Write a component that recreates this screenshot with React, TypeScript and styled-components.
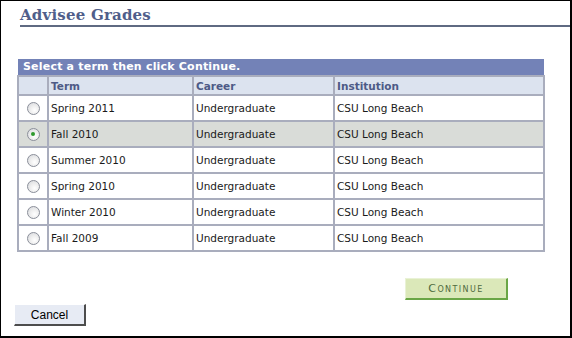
import styled, { createGlobalStyle } from "styled-components";

const GlobalStyle = createGlobalStyle`
  html, body {
    margin: 0;
    padding: 0;
    background: #ffffff;
  }
`;

const terms = [
  { term: "Spring 2011", career: "Undergraduate", institution: "CSU Long Beach" },
  { term: "Fall 2010", career: "Undergraduate", institution: "CSU Long Beach" },
  { term: "Summer 2010", career: "Undergraduate", institution: "CSU Long Beach" },
  { term: "Spring 2010", career: "Undergraduate", institution: "CSU Long Beach" },
  { term: "Winter 2010", career: "Undergraduate", institution: "CSU Long Beach" },
  { term: "Fall 2009", career: "Undergraduate", institution: "CSU Long Beach" },
];

export default function App() {
  const selected = 1;

  return (
    <>
      <GlobalStyle />
      <Page>
        <Title>Advisee Grades</Title>

        <TermTable>
          <colgroup>
            <col style={{ width: 30 }} />
            <col style={{ width: 145 }} />
            <col style={{ width: 141 }} />
            <col />
          </colgroup>
          <thead>
            <tr>
              <BarCell colSpan={4}>Select a term then click Continue.</BarCell>
            </tr>
            <tr>
              <HeadCell />
              <HeadCell>Term</HeadCell>
              <HeadCell>Career</HeadCell>
              <HeadCell>Institution</HeadCell>
            </tr>
          </thead>
          <tbody>
            {terms.map((row, i) => (
              <Row key={row.term} $selected={i === selected}>
                <RadioCell>
                  <Radio $checked={i === selected} />
                </RadioCell>
                <Cell>{row.term}</Cell>
                <Cell>{row.career}</Cell>
                <Cell>{row.institution}</Cell>
              </Row>
            ))}
          </tbody>
        </TermTable>

        <ContinueBar>
          <ContinueButton>Continue</ContinueButton>
        </ContinueBar>

        <CancelButton>Cancel</CancelButton>
      </Page>
    </>
  );
}

const Page = styled.div`
  box-sizing: border-box;
  width: 572px;
  height: 338px;
  border-style: solid;
  border-color: #000000;
  border-width: 1px 2px 2px 1px;
  background: #ffffff;
  display: flex;
  flex-direction: column;
  overflow: hidden;
`;

const Title = styled.h1`
  margin: 0 0 0 19px;
  padding: 5px 0 1px 0;
  font-family: "DejaVu Serif", Georgia, serif;
  font-size: 15px;
  font-weight: bold;
  line-height: 18px;
  letter-spacing: 0.2px;
  color: #505e8a;
  border-bottom: 2px solid #5f6a82;
`;

const TermTable = styled.table`
  margin: 32px 0 0 16px;
  width: 528px;
  table-layout: fixed;
  border-collapse: collapse;
  font-family: "DejaVu Sans", Verdana, sans-serif;
  font-size: 10.5px;
`;

const BarCell = styled.th`
  height: 16px;
  padding: 0 5px;
  background: #7382b7;
  color: #ffffff;
  font-weight: bold;
  font-size: 11px;
  line-height: 14px;
  text-align: left;
  letter-spacing: 0.2px;
  border: none;
  border-bottom: 2px solid #a9adbd;
`;

const HeadCell = styled.th`
  height: 17px;
  padding: 0 2px;
  background: #dce3ef;
  color: #4d5a86;
  font-weight: bold;
  text-align: left;
  border: 2px solid #a9adbd;
`;

const Row = styled.tr<{ $selected: boolean }>`
  background: ${(p) => (p.$selected ? "#d9dcd8" : "#ffffff")};
`;

const Cell = styled.td`
  height: 24px;
  padding: 0 2px;
  color: #1a1a1a;
  border: 2px solid #a9adbd;
  white-space: nowrap;
`;

const RadioCell = styled(Cell)`
  text-align: center;
  padding: 0;
`;

const Radio = styled.span<{ $checked: boolean }>`
  display: inline-block;
  position: relative;
  vertical-align: middle;
  box-sizing: border-box;
  width: 13px;
  height: 13px;
  border-radius: 50%;
  border: 1px solid #8b8f9a;
  background: radial-gradient(circle at 60% 65%, #ffffff 0%, #f0f0f0 40%, #d4d6da 100%);

  &::after {
    content: "";
    display: ${(p) => (p.$checked ? "block" : "none")};
    position: absolute;
    left: 3.5px;
    top: 3.5px;
    width: 4px;
    height: 4px;
    border-radius: 50%;
    background: #2f9a2f;
  }
`;

const ContinueBar = styled.div`
  display: flex;
  margin: 26px 0 0 404px;
`;

const ContinueButton = styled.button`
  box-sizing: border-box;
  width: 103px;
  height: 22px;
  padding: 0;
  background: #dbe8b9;
  border-style: solid;
  border-width: 1px 2px 2px 1px;
  border-color: #e9f2d6 #6aa646 #6aa646 #e9f2d6;
  font-family: "DejaVu Sans", Verdana, sans-serif;
  font-size: 11px;
  font-variant: small-caps;
  letter-spacing: 1.4px;
  color: #4f6b3e;
`;

const CancelButton = styled.button`
  box-sizing: border-box;
  margin: 4px 0 0 13px;
  width: 72px;
  height: 22px;
  padding: 0;
  background: #e7ebf4;
  border-style: solid;
  border-width: 1px 2px 2px 1px;
  border-color: #ffffff #4d4d4d #4d4d4d #ffffff;
  font-family: "Liberation Sans", Arial, sans-serif;
  font-size: 12px;
  color: #000000;
`;
